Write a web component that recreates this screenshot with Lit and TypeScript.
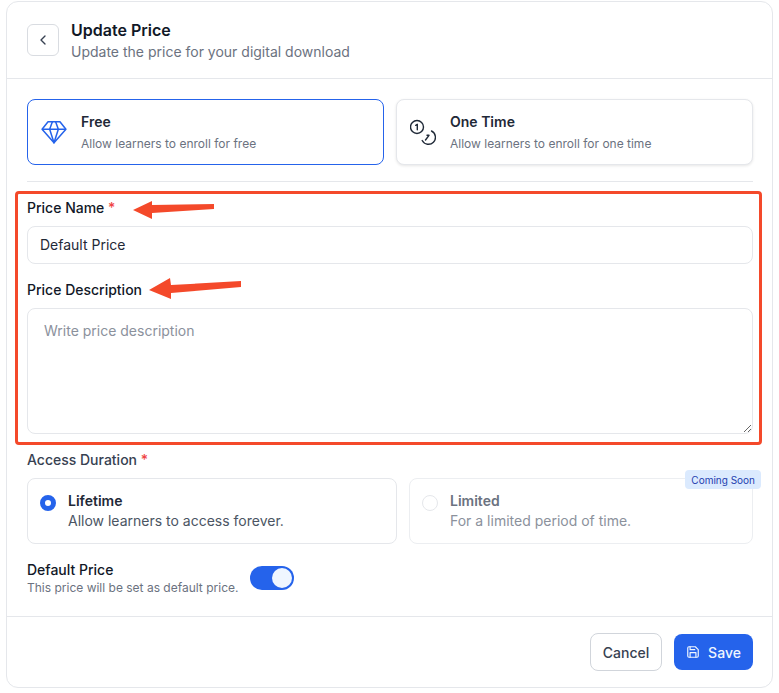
import { LitElement, html, css } from "lit";
import { customElement } from "lit/decorators.js";

@customElement("app-root")
export class AppRoot extends LitElement {
  static styles = css`
    :host { display: block; padding: 1px 6px 5px 6px; background: #fff; font-family: Inter, "Liberation Sans", sans-serif; color: #111827; }
    * { box-sizing: border-box; }
    .card { border: 1px solid #e5e7eb; border-radius: 12px; background: #fff; }
    .header { display: flex; align-items: center; gap: 12px; height: 76px; padding: 0 20px; border-bottom: 1px solid #e5e7eb; box-sizing: content-box; }
    .back { width: 32px; height: 32px; border: 1px solid #d9dce1; border-radius: 6px; background: #fff; display: flex; align-items: center; justify-content: center; padding: 0; color: #374151; }
    .title { font-size: 16px; line-height: 24px; font-weight: 600; color: #111827; }
    .sub { font-size: 14px; line-height: 20px; color: #6b7280; }
    .body { padding: 20px 19px 20px 20px; display: flex; flex-direction: column; }
    .tabs { display: grid; grid-template-columns: 1fr 1fr; gap: 12px; }
    .tab { display: flex; align-items: flex-start; gap: 14px; height: 66px; padding: 12px 13px; border: 1px solid #e5e7eb; border-radius: 8px; background: #fff; box-shadow: 0 1px 3px rgba(0,0,0,.1); }
    .tab.active { border-color: #2563eb; box-shadow: none; }
    .tab svg { flex: none; margin-top: 7px; }
    .tab .t { font-size: 14px; line-height: 20px; font-weight: 600; color: #1f2937; }
    .tab .d { font-size: 12px; line-height: 16px; margin-top: 4px; color: #6b7280; }
    .rule { height: 1px; background: #e5e7eb; margin: 16px 0 9px; }
    .highlight { position: relative; margin: 0 -9px 0 -12px; padding: 4px 6px 8px 9px; border: 3px solid #f4492a; border-radius: 4px; }
    .arrows { position: absolute; left: 0; top: 0; pointer-events: none; }
    label { display: block; font-size: 14px; line-height: 20px; font-weight: 500; color: #111827; }
    .star { color: #ef4444; }
    input, textarea { display: block; width: 100%; margin: 8px 0 0; border: 1px solid #e5e7eb; border-radius: 8px; font: inherit; font-size: 14px; line-height: 20px; color: #1f2937; background: #fff; outline: none; }
    input { height: 38px; padding: 0 12px 2px; margin-bottom: 16px; }
    textarea { height: 126px; padding: 12px 16px; resize: vertical; }
    textarea::placeholder { color: #8b919c; opacity: 1; }
    .access { margin-top: 5px; color: #374151; }
    .radios { display: grid; grid-template-columns: 370px 1fr; gap: 12px; margin-top: 8px; }
    .radio { position: relative; display: flex; align-items: flex-start; gap: 12px; height: 66px; padding: 12px; border: 1px solid #e5e7eb; border-radius: 8px; }
    .dot { flex: none; width: 16px; height: 16px; margin-top: 4px; border-radius: 50%; border: 5px solid #2563eb; background: #fff; }
    .dot.off { border: 1px solid #e5e7eb; }
    .radio .t { font-size: 14px; line-height: 20px; font-weight: 600; color: #1f2937; }
    .radio .d { font-size: 14px; line-height: 20px; color: #4b5563; }
    .radio.off { border-color: #eceef1; }
    .radio.off .t { color: #6b7280; }
    .radio.off .d { color: #8b919c; }
    .badge { position: absolute; top: -9px; right: -9px; height: 19px; padding: 0 6px; display: flex; align-items: center; font-size: 10px; font-weight: 400; color: #1e40af; background: #dbeafe; border-radius: 4px; }
    .default { display: flex; align-items: center; gap: 12px; margin-top: 16px; }
    .default .t { font-size: 14px; line-height: 20px; font-weight: 500; color: #111827; }
    .default .d { font-size: 12px; line-height: 16px; color: #6b7280; }
    .toggle { width: 44px; height: 24px; border-radius: 12px; background: #2563eb; padding: 2px; display: flex; justify-content: flex-end; }
    .knob { width: 20px; height: 20px; border-radius: 50%; background: #eff6ff; }
    .footer { display: flex; justify-content: flex-end; align-items: center; gap: 12px; padding: 16px 19px 16px 20px; border-top: 1px solid #e5e7eb; }
    button { font-family: inherit; }
    .cancel { height: 38px; width: 72px; padding: 0; font-size: 14px; font-weight: 500; color: #374151; background: #fff; border: 1px solid #d1d5db; border-radius: 8px; }
    .save { height: 36px; width: 79px; padding: 0; display: flex; align-items: center; justify-content: center; gap: 8px; font-size: 14px; font-weight: 500; color: #eff6ff; background: #2563eb; border: none; border-radius: 8px; }
  `;

  render() {
    return html`
      <div class="card">
        <div class="header">
          <button class="back" aria-label="Back">
            <svg width="16" height="16" viewBox="0 0 24 24" fill="none" stroke="currentColor" stroke-width="2" stroke-linecap="round" stroke-linejoin="round"><path d="M15 18l-6-6 6-6"/></svg>
          </button>
          <div>
            <div class="title">Update Price</div>
            <div class="sub">Update the price for your digital download</div>
          </div>
        </div>
        <div class="body">
          <div class="tabs">
            <div class="tab active">
              <svg width="26" height="26" viewBox="0 0 24 24" fill="none" stroke="#2563eb" stroke-width="1.4" stroke-linejoin="round"><path d="M6.5 2.500h11L23 9.500 12 22 1 9.500z"/><path d="M1 9.500h22M8 9.500l4 12.500 4-12.500M8 9.500l2.500-7M16 9.500l-2.500-7"/></svg>
              <div><div class="t">Free</div><div class="d">Allow learners to enroll for free</div></div>
            </div>
            <div class="tab">
              <svg width="26" height="26" viewBox="0 0 26 26" fill="none" stroke="#1f2937" stroke-width="1.400" stroke-linecap="round" stroke-linejoin="round"><circle cx="7" cy="8" r="6.500"/><path d="M5.700 6.300 7.300 5.300V10.700"/><path d="M21.500 12A7 7 0 1 1 12.200 21.500"/><path d="M15.500 21 19 16.300M17 16.300h2"/></svg>
              <div><div class="t">One Time</div><div class="d">Allow learners to enroll for one time</div></div>
            </div>
          </div>
          <div class="rule"></div>
          <div class="highlight">
            <label>Price Name <span class="star">*</span></label>
            <input value="Default Price" />
            <label>Price Description</label>
            <textarea placeholder="Write price description"></textarea>
            <svg class="arrows" width="240" height="110" viewBox="0 0 240 110" fill="#f4492a"><path d="M115 16 134 7 134 11 196 10 196 15 134 19 134 25z"/><path d="M131 96 152 84 153 91 223 87 223 93 153 99 153 105z"/></svg>
          </div>
          <label class="access">Access Duration <span class="star">*</span></label>
          <div class="radios">
            <div class="radio">
              <span class="dot"></span>
              <div><div class="t">Lifetime</div><div class="d">Allow learners to access forever.</div></div>
            </div>
            <div class="radio off">
              <span class="dot off"></span>
              <div><div class="t">Limited</div><div class="d">For a limited period of time.</div></div>
              <span class="badge">Coming Soon</span>
            </div>
          </div>
          <div class="default">
            <div><div class="t">Default Price</div><div class="d">This price will be set as default price.</div></div>
            <div class="toggle"><div class="knob"></div></div>
          </div>
        </div>
        <div class="footer">
          <button class="cancel">Cancel</button>
          <button class="save">
            <svg width="14" height="14" viewBox="0 0 24 24" fill="none" stroke="currentColor" stroke-width="2" stroke-linecap="round" stroke-linejoin="round"><path d="M19 21H5a2 2 0 0 1-2-2V5a2 2 0 0 1 2-2h11l5 5v11a2 2 0 0 1-2 2z"/><path d="M17 21v-8H7v8"/><path d="M7 3v5h8"/></svg>
            Save
          </button>
        </div>
      </div>
    `;
  }
}
